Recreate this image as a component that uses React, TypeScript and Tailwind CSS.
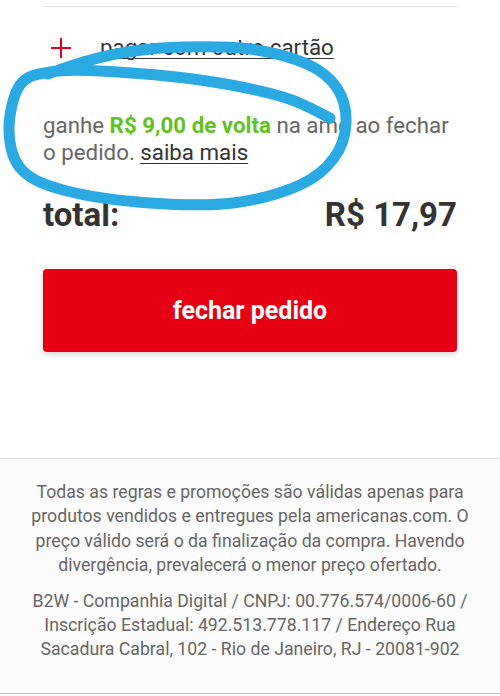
import React from "react";

type Pt = [number, number];

// contorno azul desenhado a mão sobre a tela
const SCRIBBLE: Pt[] = [
  [330, 118],
  [283, 97],
  [200, 80],
  [100, 71],
  [50, 72],
  [20, 85],
  [9, 130],
  [22, 170],
  [67, 191],
  [150, 203],
  [233, 203],
  [300, 185],
  [334, 158],
  [346, 123],
  [337, 88],
  [307, 64],
  [250, 49],
  [183, 47],
  [127, 52],
  [83, 62],
  [48, 74],
];

function smoothPath(pts: Pt[]) {
  let d = `M${pts[0][0]} ${pts[0][1]}`;
  for (let i = 0; i < pts.length - 1; i++) {
    const p0 = pts[i - 1] ?? pts[i];
    const p1 = pts[i];
    const p2 = pts[i + 1];
    const p3 = pts[i + 2] ?? p2;
    const c1x = p1[0] + (p2[0] - p0[0]) / 6;
    const c1y = p1[1] + (p2[1] - p0[1]) / 6;
    const c2x = p2[0] - (p3[0] - p1[0]) / 6;
    const c2y = p2[1] - (p3[1] - p1[1]) / 6;
    d += ` C${c1x} ${c1y} ${c2x} ${c2y} ${p2[0]} ${p2[1]}`;
  }
  return d;
}

function PlusIcon() {
  return (
    <svg width="22" height="22" viewBox="0 0 22 22" className="shrink-0">
      <path d="M11 1v20M1 11h20" stroke="#e60014" strokeWidth="2" />
    </svg>
  );
}

export default function App() {
  return (
    <div className="relative w-full overflow-hidden bg-white font-['Roboto',sans-serif]">
      <div className="px-[43px] pt-[6px]">
        <div className="h-px bg-[#e3e3e3]" />

        <div className="mt-[21px] flex h-[40px] items-center">
          <span className="ml-[7px]">
            <PlusIcon />
          </span>
          <a className="ml-[28px] text-[22.3px] text-[#333] underline underline-offset-[3px] decoration-1">
            pagar com outro cartão
          </a>
        </div>

        <p className="mt-[44px] text-[22.3px] leading-[27px] text-[#666]">
          ganhe{" "}
          <span className="font-bold text-[#62c11e]">R$ 9,00 de volta</span> na
          ame ao fechar o pedido.{" "}
          <a className="text-[#333] underline underline-offset-[3px] decoration-1">
            saiba mais
          </a>
        </p>

        <div className="mt-[29px] flex h-[40px] items-center justify-between text-[33px] font-bold text-[#333]">
          <span>total:</span>
          <span>R$ 17,97</span>
        </div>

        <button className="mt-[34px] flex h-[83px] w-full items-center justify-center rounded-[4px] bg-[#e60014] text-[25px] font-bold text-white shadow-[0_2px_6px_rgba(0,0,0,0.18)]">
          fechar pedido
        </button>
      </div>

      <div className="mt-[106px] border-t border-[#e3e3e3] bg-[#fcfcfc] px-[20px] pb-[31px] pt-[21px] text-center text-[17.7px] leading-[24.4px] text-[#666]">
        <p>
          Todas as regras e promoções são válidas apenas para produtos vendidos e
          entregues pela americanas.com. O preço válido será o da finalização da
          compra. Havendo divergência, prevalecerá o menor preço ofertado.
        </p>
        <p className="mt-[11px]">
          B2W - Companhia Digital / CNPJ: 00.776.574/0006-60 / Inscrição
          Estadual: 492.513.778.117 / Endereço Rua Sacadura Cabral, 102 - Rio de
          Janeiro, RJ - 20081-902
        </p>
      </div>
      <div className="h-px bg-[#bdbdbd]" />

      <svg
        className="pointer-events-none absolute left-0 top-0"
        width="500"
        height="240"
        viewBox="0 0 500 240"
      >
        <path
          d={smoothPath(SCRIBBLE)}
          fill="none"
          stroke="#2aa9e2"
          strokeWidth="11"
          strokeLinecap="round"
          strokeLinejoin="round"
        />
      </svg>
    </div>
  );
}
